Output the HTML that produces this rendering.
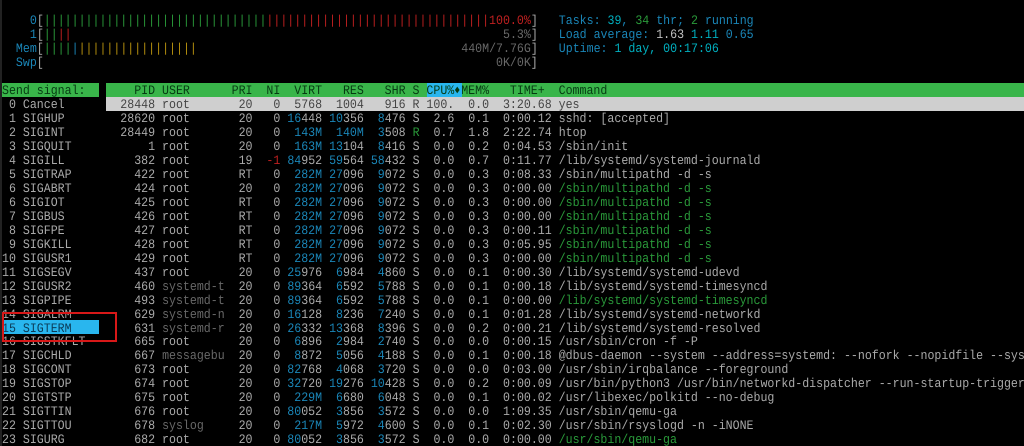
<!DOCTYPE html>
<html><head><meta charset="utf-8"><title>htop</title>
<style>
html,body{margin:0;padding:0;background:#000;width:1024px;height:446px;overflow:hidden}
body{position:relative;font-family:"Liberation Mono","DejaVu Sans Mono",monospace;font-size:11.6px;color:#aaa;text-rendering:geometricPrecision}
.c{position:absolute;line-height:13.96px}
.c div{height:13.96px;white-space:pre;transform:scaleY(1.12);transform-origin:50% 50%}
.a{position:absolute}
b{font-weight:normal;color:#1a86b8}
i{font-style:normal;color:#686868}
u{text-decoration:none;color:#2a9a3a}
s{text-decoration:none;color:#c02020}
em{font-style:normal;color:#b8920f}
q{quotes:none;color:#00b0c0}
q:before,q:after{content:""}
</style></head><body>
<div class="a" style="left:0;top:0;width:2px;height:446px;background:#222"></div>
<div class="a" style="left:2px;top:83px;width:97px;height:14px;background:#39b54a"></div>
<div class="a" style="left:106px;top:83px;width:918px;height:14px;background:#39b54a"></div>
<div class="a" style="left:106px;top:97px;width:918px;height:14px;background:#cfcfcf"></div>
<div class="a" style="left:2px;top:320px;width:97px;height:14px;background:#29b6ee"></div>
<div class="a" style="left:427px;top:83px;width:35px;height:14px;background:#29b6ee"></div>

<div class="c" style="left:2px;top:15px"><div>    <b>0</b>[<u>||||||||||||||||||||||||||||||||</u><s>||||||||||||||||||||||||||||||||100.0%</s>]</div><div>    <b>1</b>[<u>||</u><s>||</s>                                                              <i>5.3%</i>]</div><div>  <b>Mem</b>[<u>||||</u><b>|</b><em>|||||||||||||||||</em>                                      <i>440M/7.76G</i>]</div><div>  <b>Swp</b>[                                                                 <i>0K/0K</i>]</div></div>

<div class="c" style="left:558.8px;top:15px"><div><b>Tasks: </b><q>39</q><b>, </b><u>34</u><b> thr; </b><u>2</u><b> running</b></div><div><b>Load average: </b><span style="color:#c0c0c0">1.63 </span><q>1.11 </q><b>0.65</b></div><div><b>Uptime: </b><q>1 day, 00:17:06</q></div></div>

<div class="c" style="left:2px;top:85.3px"><div style="color:#063a12">Send signal:</div><div> 0 Cancel</div><div> 1 SIGHUP</div><div> 2 SIGINT</div><div> 3 SIGQUIT</div><div> 4 SIGILL</div><div> 5 SIGTRAP</div><div> 6 SIGABRT</div><div> 6 SIGIOT</div><div> 7 SIGBUS</div><div> 8 SIGFPE</div><div> 9 SIGKILL</div><div>10 SIGUSR1</div><div>11 SIGSEGV</div><div>12 SIGUSR2</div><div>13 SIGPIPE</div><div>14 SIGALRM</div><div style="color:#0b3a55">15 SIGTERM</div><div>16 SIGSTKFLT</div><div>17 SIGCHLD</div><div>18 SIGCONT</div><div>19 SIGSTOP</div><div>20 SIGTSTP</div><div>21 SIGTTIN</div><div>22 SIGTTOU</div><div>23 SIGURG</div></div>

<div class="c" style="left:106.4px;top:85.3px"><div style="color:#063a12">    PID USER      PRI  NI  VIRT   RES   SHR S CPU%<span style="display:inline-block;width:6.96px;font-family:'DejaVu Sans Mono',monospace;font-size:10px;vertical-align:0">♦</span>MEM%   TIME+  Command</div><div style="color:#444">  28448 root       20   0  5768  1004   916 R 100.  0.0  3:20.68 yes</div><div>  28620 root       20   0 <b>16</b>448 <b>10</b>356  <b>8</b>476 S  2.6  0.1  0:00.12 sshd: [accepted]</div><div>  28449 root       20   0  <b>143M</b>  <b>140M</b>  <b>3</b>508 <u>R</u>  0.7  1.8  2:22.74 htop</div><div>      1 root       20   0  <b>163M</b> <b>13</b>104  <b>8</b>416 S  0.0  0.2  0:04.53 /sbin/init</div><div>    382 root       19  <s>-1</s> <b>84</b>952 <b>59</b>564 <b>58</b>432 S  0.0  0.7  0:11.77 /lib/systemd/systemd-journald</div><div>    422 root       RT   0  <b>282M</b> <b>27</b>096  <b>9</b>072 S  0.0  0.3  0:08.33 /sbin/multipathd -d -s</div><div>    424 root       20   0  <b>282M</b> <b>27</b>096  <b>9</b>072 S  0.0  0.3  0:00.00 <u>/sbin/multipathd -d -s</u></div><div>    425 root       RT   0  <b>282M</b> <b>27</b>096  <b>9</b>072 S  0.0  0.3  0:00.00 <u>/sbin/multipathd -d -s</u></div><div>    426 root       RT   0  <b>282M</b> <b>27</b>096  <b>9</b>072 S  0.0  0.3  0:00.00 <u>/sbin/multipathd -d -s</u></div><div>    427 root       RT   0  <b>282M</b> <b>27</b>096  <b>9</b>072 S  0.0  0.3  0:00.11 <u>/sbin/multipathd -d -s</u></div><div>    428 root       RT   0  <b>282M</b> <b>27</b>096  <b>9</b>072 S  0.0  0.3  0:05.95 <u>/sbin/multipathd -d -s</u></div><div>    429 root       RT   0  <b>282M</b> <b>27</b>096  <b>9</b>072 S  0.0  0.3  0:00.00 <u>/sbin/multipathd -d -s</u></div><div>    437 root       20   0 <b>25</b>976  <b>6</b>984  <b>4</b>860 S  0.0  0.1  0:00.30 /lib/systemd/systemd-udevd</div><div>    460 <i>systemd-t</i>  20   0 <b>89</b>364  <b>6</b>592  <b>5</b>788 S  0.0  0.1  0:00.18 /lib/systemd/systemd-timesyncd</div><div>    493 <i>systemd-t</i>  20   0 <b>89</b>364  <b>6</b>592  <b>5</b>788 S  0.0  0.1  0:00.00 <u>/lib/systemd/systemd-timesyncd</u></div><div>    629 <i>systemd-n</i>  20   0 <b>16</b>128  <b>8</b>236  <b>7</b>240 S  0.0  0.1  0:01.28 /lib/systemd/systemd-networkd</div><div>    631 <i>systemd-r</i>  20   0 <b>26</b>332 <b>13</b>368  <b>8</b>396 S  0.0  0.2  0:00.21 /lib/systemd/systemd-resolved</div><div>    665 root       20   0  <b>6</b>896  <b>2</b>984  <b>2</b>740 S  0.0  0.0  0:00.15 /usr/sbin/cron -f -P</div><div>    667 <i>messagebu</i>  20   0  <b>8</b>872  <b>5</b>056  <b>4</b>188 S  0.0  0.1  0:00.18 @dbus-daemon --system --address=systemd: --nofork --nopidfile --sys</div><div>    673 root       20   0 <b>82</b>768  <b>4</b>068  <b>3</b>720 S  0.0  0.0  0:03.00 /usr/sbin/irqbalance --foreground</div><div>    674 root       20   0 <b>32</b>720 <b>19</b>276 <b>10</b>428 S  0.0  0.2  0:00.09 /usr/bin/python3 /usr/bin/networkd-dispatcher --run-startup-trigger</div><div>    675 root       20   0  <b>229M</b>  <b>6</b>680  <b>6</b>048 S  0.0  0.1  0:00.02 /usr/libexec/polkitd --no-debug</div><div>    676 root       20   0 <b>80</b>052  <b>3</b>856  <b>3</b>572 S  0.0  0.0  1:09.35 /usr/sbin/qemu-ga</div><div>    678 <i>syslog</i>     20   0  <b>217M</b>  <b>5</b>972  <b>4</b>600 S  0.0  0.1  0:02.30 /usr/sbin/rsyslogd -n -iNONE</div><div>    682 root       20   0 <b>80</b>052  <b>3</b>856  <b>3</b>572 S  0.0  0.0  0:00.00 <u>/usr/sbin/qemu-ga</u></div></div>

<div class="a" style="left:2px;top:312px;width:111px;height:26px;border:2px solid #d81818"></div>
</body></html>
